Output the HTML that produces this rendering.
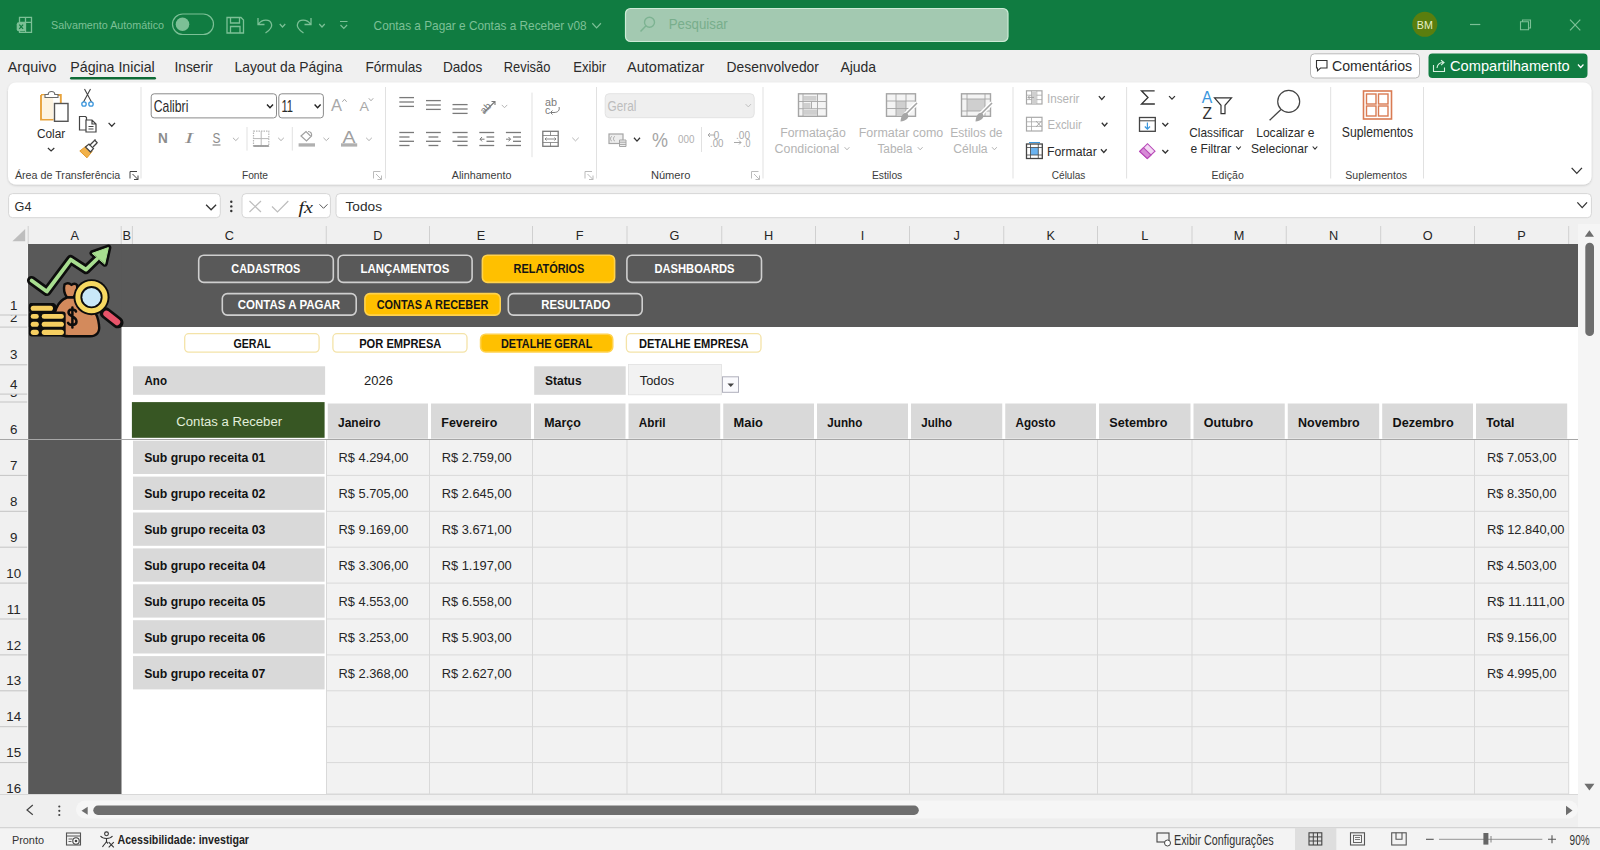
<!DOCTYPE html>
<html><head><meta charset="utf-8"><style>html,body{margin:0;padding:0;background:#F0F0F0;overflow:hidden}svg{display:block}</style></head>
<body><svg width="1600" height="850" viewBox="0 0 1600 850" font-family="Liberation Sans"><rect x="0" y="0" width="1600" height="850" fill="#F0F0F0" /><rect x="0" y="0" width="1600" height="50" fill="#107C41" /><path d="M19.5,17.3 h12 v15 h-12 z M25.5,17.3 v15 M19.5,22.3 h12" stroke="#7CC096" fill="none" stroke-width="1.3" /><rect x="16.7" y="22.2" width="9" height="9" fill="#7CC096" rx="2" /><path d="M19.3,24.6 L23.1,28.8 M23.1,24.6 L19.3,28.8" stroke="#107C41" fill="none" stroke-width="1.2" /><text x="51" y="29.2" font-family="Liberation Sans" font-size="11.48" fill="#7CC096" textLength="113" lengthAdjust="spacingAndGlyphs" >Salvamento Automático</text><rect x="172.5" y="14" width="41" height="20.5" fill="none" rx="10.25" stroke="#7CC096" stroke-width="1.2" /><circle cx="182.5" cy="24.3" r="6.8" fill="#7CC096"/><path d="M227,17.5 h14 l2.5,2.5 v13 h-16.5 z M230.5,17.5 v5.5 h9 v-5.5 M230.5,33 v-6.5 h9.5 v6.5" stroke="#7CC096" fill="none" stroke-width="1.3" /><path d="M258,18 v6.5 h6.5 M258.5,24 C262,19 270,18.5 271.5,24 C272.5,27 270,30 265.5,33" stroke="#7CC096" fill="none" stroke-width="1.3" /><path d="M279.75,24.0 L282.5,27.0 L285.25,24.0" stroke="#7CC096" fill="none" stroke-width="1.2" /><path d="M311,18 v6.5 h-6.5 M310.5,24 C307,19 299,18.5 297.5,24 C296.5,27 299,30 303.5,33" stroke="#7CC096" fill="none" stroke-width="1.3" /><path d="M319.25,24.0 L322,27.0 L324.75,24.0" stroke="#7CC096" fill="none" stroke-width="1.2" /><path d="M340,21.5 h7.5 M340.5,25 l3.3,3.3 l3.3,-3.3" stroke="#7CC096" fill="none" stroke-width="1.2" /><text x="373.6" y="30" font-family="Liberation Sans" font-size="12.72" fill="#7CC096" textLength="213" lengthAdjust="spacingAndGlyphs" >Contas a Pagar e Contas a Receber v08</text><path d="M592.3000000000001,23.25 L596.6,27.950000000000003 L600.9,23.25" stroke="#7CC096" fill="none" stroke-width="1.2" /><rect x="625.5" y="8.5" width="382.5" height="33" fill="#A3C9B1" rx="5" stroke="#CDEBD6" stroke-width="1.2" /><circle cx="649.5" cy="22.3" r="5" fill="none" stroke="#7DB392" stroke-width="1.4"/><line x1="646" y1="25.8" x2="640.5" y2="31.5" stroke="#7DB392" stroke-width="1.5" /><text x="668.7" y="29" font-family="Liberation Sans" font-size="14.53" fill="#78AE8C" textLength="59" lengthAdjust="spacingAndGlyphs" >Pesquisar</text><circle cx="1424.8" cy="24.3" r="12.5" fill="#5A7E0E"/><text x="1424.8" y="28.6" font-family="Liberation Sans" font-size="11.00" fill="#E8F0C8" textLength="16" lengthAdjust="spacingAndGlyphs" text-anchor="middle" >BM</text><line x1="1470" y1="24.5" x2="1480.3" y2="24.5" stroke="#7CC096" stroke-width="1.2" /><path d="M1520.5,21.7 h8 v8 h-8 z M1522.5,21.5 v-1.5 h8 v8 h-1.8" stroke="#7CC096" fill="none" stroke-width="1.1" /><path d="M1570,19.7 L1580.3,30.4 M1580.3,19.7 L1570,30.4" stroke="#7CC096" fill="none" stroke-width="1.2" /><text x="7.8" y="71.8" font-family="Liberation Sans" font-size="14.97" fill="#2B2B2B" textLength="48.7" lengthAdjust="spacingAndGlyphs" >Arquivo</text><text x="70.3" y="71.8" font-family="Liberation Sans" font-size="14.97" fill="#2B2B2B" textLength="84.4" lengthAdjust="spacingAndGlyphs" >Página Inicial</text><text x="174.4" y="71.8" font-family="Liberation Sans" font-size="14.97" fill="#2B2B2B" textLength="38.5" lengthAdjust="spacingAndGlyphs" >Inserir</text><text x="234.5" y="71.8" font-family="Liberation Sans" font-size="14.97" fill="#2B2B2B" textLength="107.9" lengthAdjust="spacingAndGlyphs" >Layout da Página</text><text x="365.4" y="71.8" font-family="Liberation Sans" font-size="14.97" fill="#2B2B2B" textLength="56.8" lengthAdjust="spacingAndGlyphs" >Fórmulas</text><text x="442.9" y="71.8" font-family="Liberation Sans" font-size="14.97" fill="#2B2B2B" textLength="39.4" lengthAdjust="spacingAndGlyphs" >Dados</text><text x="503.8" y="71.8" font-family="Liberation Sans" font-size="14.97" fill="#2B2B2B" textLength="46.6" lengthAdjust="spacingAndGlyphs" >Revisão</text><text x="573.3" y="71.8" font-family="Liberation Sans" font-size="14.97" fill="#2B2B2B" textLength="32.8" lengthAdjust="spacingAndGlyphs" >Exibir</text><text x="627.1" y="71.8" font-family="Liberation Sans" font-size="14.97" fill="#2B2B2B" textLength="77.3" lengthAdjust="spacingAndGlyphs" >Automatizar</text><text x="726.6" y="71.8" font-family="Liberation Sans" font-size="14.97" fill="#2B2B2B" textLength="92.3" lengthAdjust="spacingAndGlyphs" >Desenvolvedor</text><text x="840.4" y="71.8" font-family="Liberation Sans" font-size="14.97" fill="#2B2B2B" textLength="35.7" lengthAdjust="spacingAndGlyphs" >Ajuda</text><rect x="70" y="77" width="86" height="2.6" fill="#0E6B36" rx="1.3" /><rect x="1310.5" y="53.8" width="109" height="24.2" fill="#FFFFFF" rx="4" stroke="#B9B9B9" stroke-width="1" /><path d="M1316.5,60.5 h10.5 v7.5 h-6.5 l-3,2.8 v-2.8 h-1 z" stroke="#333" fill="none" stroke-width="1.1" /><text x="1332" y="71.2" font-family="Liberation Sans" font-size="15.12" fill="#2B2B2B" textLength="80.2" lengthAdjust="spacingAndGlyphs" >Comentários</text><rect x="1428.5" y="53.6" width="159" height="24.4" fill="#107C41" rx="4" /><path d="M1433.5,65 v6.5 h11 v-4 M1437,68 c0.5,-4 3,-5.5 6.5,-5.5 M1441,60.3 l3,2.3 l-3,2.5" stroke="#D8F0E0" fill="none" stroke-width="1.1" /><text x="1450" y="71.2" font-family="Liberation Sans" font-size="15.12" fill="#FFFFFF" textLength="119.6" lengthAdjust="spacingAndGlyphs" >Compartilhamento</text><path d="M1577.95,64.5 L1580.7,67.5 L1583.45,64.5" stroke="#FFFFFF" fill="none" stroke-width="1.2" /><filter id="sh" x="-2%" y="-10%" width="104%" height="130%"><feDropShadow dx="0" dy="1" stdDeviation="1.2" flood-color="#000" flood-opacity="0.18"/></filter><rect x="8" y="82.5" width="1583.5" height="102" fill="#FFFFFF" rx="8" filter="url(#sh)"/><line x1="141" y1="87" x2="141" y2="178.5" stroke="#E1E1E1" stroke-width="1" /><line x1="385.5" y1="87" x2="385.5" y2="178.5" stroke="#E1E1E1" stroke-width="1" /><line x1="596.5" y1="87" x2="596.5" y2="178.5" stroke="#E1E1E1" stroke-width="1" /><line x1="763" y1="87" x2="763" y2="178.5" stroke="#E1E1E1" stroke-width="1" /><line x1="1013" y1="87" x2="1013" y2="178.5" stroke="#E1E1E1" stroke-width="1" /><line x1="1126.6" y1="87" x2="1126.6" y2="178.5" stroke="#E1E1E1" stroke-width="1" /><line x1="1330.7" y1="87" x2="1330.7" y2="178.5" stroke="#E1E1E1" stroke-width="1" /><line x1="1423.5" y1="87" x2="1423.5" y2="178.5" stroke="#E1E1E1" stroke-width="1" /><text x="14.9" y="178.6" font-family="Liberation Sans" font-size="11.05" fill="#3C3C3C" textLength="105.4" lengthAdjust="spacingAndGlyphs" >Área de Transferência</text><text x="241.9" y="178.6" font-family="Liberation Sans" font-size="11.05" fill="#3C3C3C" textLength="26.1" lengthAdjust="spacingAndGlyphs" >Fonte</text><text x="451.8" y="178.6" font-family="Liberation Sans" font-size="11.05" fill="#3C3C3C" textLength="59.6" lengthAdjust="spacingAndGlyphs" >Alinhamento</text><text x="650.9" y="178.6" font-family="Liberation Sans" font-size="11.05" fill="#3C3C3C" textLength="39.5" lengthAdjust="spacingAndGlyphs" >Número</text><text x="871.9" y="178.6" font-family="Liberation Sans" font-size="11.05" fill="#3C3C3C" textLength="30.4" lengthAdjust="spacingAndGlyphs" >Estilos</text><text x="1051.8" y="178.6" font-family="Liberation Sans" font-size="11.05" fill="#3C3C3C" textLength="33.5" lengthAdjust="spacingAndGlyphs" >Células</text><text x="1211.6" y="178.6" font-family="Liberation Sans" font-size="11.05" fill="#3C3C3C" textLength="32.2" lengthAdjust="spacingAndGlyphs" >Edição</text><text x="1345.3" y="178.6" font-family="Liberation Sans" font-size="11.05" fill="#3C3C3C" textLength="61.8" lengthAdjust="spacingAndGlyphs" >Suplementos</text><path d="M130.0,178.5 v-7 h7" stroke="#444" fill="none" stroke-width="1" /><path d="M132.5,174 L138.0,179.5 M138.0,175.5 v4 h-4" stroke="#444" fill="none" stroke-width="1" /><path d="M373.5,178.5 v-7 h7" stroke="#BBB" fill="none" stroke-width="1" /><path d="M376,174 L381.5,179.5 M381.5,175.5 v4 h-4" stroke="#BBB" fill="none" stroke-width="1" /><path d="M585.0,178.5 v-7 h7" stroke="#BBB" fill="none" stroke-width="1" /><path d="M587.5,174 L593.0,179.5 M593.0,175.5 v4 h-4" stroke="#BBB" fill="none" stroke-width="1" /><path d="M751.5,178.5 v-7 h7" stroke="#BBB" fill="none" stroke-width="1" /><path d="M754,174 L759.5,179.5 M759.5,175.5 v4 h-4" stroke="#BBB" fill="none" stroke-width="1" /><path d="M41,95 h5 M56,95 h4.8 v8 M41,95 v24.5 h12.5" stroke="#E8A33C" fill="none" stroke-width="1.9" /><rect x="42.2" y="95.2" width="11" height="23.8" fill="#FDF3E0" /><path d="M45,97.5 v-3 h3.2 c0,-4 6.6,-4 6.6,0 h3.2 v3 z" stroke="#6A6A6A" fill="#FFFFFF" stroke-width="1.1" /><rect x="54.5" y="103.5" width="13.5" height="17.8" fill="#FFFFFF" stroke="#555" stroke-width="1.4" /><text x="36.9" y="138.2" font-family="Liberation Sans" font-size="12.21" fill="#2B2B2B" textLength="28.4" lengthAdjust="spacingAndGlyphs" >Colar</text><path d="M47.9,148.0 L51.1,151.0 L54.300000000000004,148.0" stroke="#333" fill="none" stroke-width="1.2" /><path d="M84.5,89 L91.5,102 M90.5,89 L83.5,102" stroke="#444" fill="none" stroke-width="1.1" /><circle cx="84" cy="104" r="2.2" fill="none" stroke="#3A96DD" stroke-width="1.3"/><circle cx="91" cy="104" r="2.2" fill="none" stroke="#3A96DD" stroke-width="1.3"/><path d="M79.5,116.5 h6 l1,1 v12.5 h-7 z" stroke="#444" fill="#FFFFFF" stroke-width="1.2" /><path d="M86,120 h6 l4,4 v8 h-10 z M92,120 v4 h4 M88.5,126.5 h5 M88.5,129 h5" stroke="#444" fill="#FFFFFF" stroke-width="1.2" /><path d="M108.6,122.89999999999999 L111.8,126.3 L115.0,122.89999999999999" stroke="#333" fill="none" stroke-width="1.3" /><path d="M79.8,151 L86.5,145.8 L92,151.5 L87,157.8 Z" stroke="#E39A2C" fill="#F2B24A" stroke-width="1" /><path d="M85.5,147 L89,144 L93.5,148.5 L90.5,152 Z" stroke="#444" fill="#FFFFFF" stroke-width="1.2" /><path d="M89.5,145.5 L95.5,139.5 M93,147 L97,143" stroke="#444" fill="none" stroke-width="1.3" /><path d="M94.5,140 L97.5,143" stroke="#444" fill="none" stroke-width="1.3" /><rect x="151.2" y="93.8" width="125.3" height="24.1" fill="#FFFFFF" rx="3" stroke="#8A8A8A" stroke-width="1" /><text x="153.8" y="111.5" font-family="Liberation Sans" font-size="15.99" fill="#2B2B2B" textLength="34.6" lengthAdjust="spacingAndGlyphs" >Calibri</text><path d="M267.0,104.60000000000001 L270,107.8 L273.0,104.60000000000001" stroke="#222" fill="none" stroke-width="1.4" /><rect x="278.8" y="93.8" width="44.6" height="24.1" fill="#FFFFFF" rx="3" stroke="#8A8A8A" stroke-width="1" /><text x="281.4" y="111.5" font-family="Liberation Sans" font-size="15.99" fill="#2B2B2B" textLength="11.6" lengthAdjust="spacingAndGlyphs" >11</text><path d="M314.6,104.60000000000001 L317.6,107.8 L320.6,104.60000000000001" stroke="#222" fill="none" stroke-width="1.4" /><text x="331" y="110.8" font-family="Liberation Sans" font-size="16.50" fill="#A8A8A8" textLength="11" lengthAdjust="spacingAndGlyphs" >A</text><path d="M342.3,101.8 L344.5,99.3 L346.7,101.8" stroke="#A8A8A8" fill="none" stroke-width="1" /><text x="359.5" y="110.8" font-family="Liberation Sans" font-size="13.50" fill="#A8A8A8" textLength="9.5" lengthAdjust="spacingAndGlyphs" >A</text><path d="M368.75,98.25 L371,100.75 L373.25,98.25" stroke="#A8A8A8" fill="none" stroke-width="1" /><text x="158" y="142.8" font-family="Liberation Sans" font-size="14.68" fill="#8C8C8C" font-weight="bold" textLength="9.8" lengthAdjust="spacingAndGlyphs" >N</text><text x="185" y="142.8" font-family="Liberation Serif" font-size="15.00" fill="#8C8C8C" textLength="8" lengthAdjust="spacingAndGlyphs" font-style="italic">I</text><text x="212.6" y="142.8" font-family="Liberation Sans" font-size="14.68" fill="#8C8C8C" textLength="7.9" lengthAdjust="spacingAndGlyphs" >S</text><line x1="212.6" y1="145" x2="220.5" y2="145" stroke="#8C8C8C" stroke-width="1.2" /><path d="M232.95000000000002,137.79999999999998 L235.8,140.6 L238.65,137.79999999999998" stroke="#B0B0B0" fill="none" stroke-width="1" /><line x1="247" y1="127" x2="247" y2="150.6" stroke="#E1E1E1" stroke-width="1" /><rect x="253.5" y="131.2" width="15.3" height="14.8" fill="none" stroke="#B8B8B8" stroke-width="1.2" stroke-dasharray="1.5,1"/><line x1="261.2" y1="131.2" x2="261.2" y2="146" stroke="#B8B8B8" stroke-width="1" /><line x1="253.5" y1="138.6" x2="268.8" y2="138.6" stroke="#B8B8B8" stroke-width="1" /><line x1="253.5" y1="146" x2="268.8" y2="146" stroke="#9A9A9A" stroke-width="1.8" /><path d="M278.15,137.79999999999998 L281,140.6 L283.85,137.79999999999998" stroke="#B0B0B0" fill="none" stroke-width="1" /><line x1="292.3" y1="127" x2="292.3" y2="150.6" stroke="#E1E1E1" stroke-width="1" /><path d="M301,136 L306,131.5 L311,136.5 L306.5,141 Z M308,131.5 c3,0 4,2 3.5,5" stroke="#A0A0A0" fill="#FFFFFF" stroke-width="1.2" /><rect x="298.6" y="143.3" width="16.4" height="3.3" fill="#B0B0B0" /><path d="M323.45,137.79999999999998 L326.3,140.6 L329.15000000000003,137.79999999999998" stroke="#B0B0B0" fill="none" stroke-width="1" /><text x="342.5" y="142.5" font-family="Liberation Sans" font-size="16.00" fill="#A0A0A0" textLength="13" lengthAdjust="spacingAndGlyphs" >A</text><rect x="341" y="143.3" width="16.2" height="3.3" fill="#B0B0B0" /><path d="M366.15,137.79999999999998 L369,140.6 L371.85,137.79999999999998" stroke="#B0B0B0" fill="none" stroke-width="1" /><line x1="399.3" y1="97.6" x2="414" y2="97.6" stroke="#7A7A7A" stroke-width="1.3" /><line x1="399.3" y1="102" x2="414" y2="102" stroke="#7A7A7A" stroke-width="1.3" /><line x1="399.3" y1="106.4" x2="414" y2="106.4" stroke="#7A7A7A" stroke-width="1.3" /><line x1="426" y1="100.6" x2="440.8" y2="100.6" stroke="#7A7A7A" stroke-width="1.3" /><line x1="426" y1="105" x2="440.8" y2="105" stroke="#7A7A7A" stroke-width="1.3" /><line x1="426" y1="109.4" x2="440.8" y2="109.4" stroke="#7A7A7A" stroke-width="1.3" /><line x1="452.5" y1="104.6" x2="467.6" y2="104.6" stroke="#7A7A7A" stroke-width="1.3" /><line x1="452.5" y1="109" x2="467.6" y2="109" stroke="#7A7A7A" stroke-width="1.3" /><line x1="452.5" y1="113.4" x2="467.6" y2="113.4" stroke="#7A7A7A" stroke-width="1.3" /><text x="478" y="112" font-family="Liberation Sans" font-size="10.00" fill="#7A7A7A" transform="rotate(-45 484 106)">ab</text><path d="M484,112.5 L495,101.5 M491.5,101.5 h3.5 v3.5" stroke="#7A7A7A" fill="none" stroke-width="1.1" /><path d="M501.75,104.89999999999999 L504.5,107.7 L507.25,104.89999999999999" stroke="#B5B5B5" fill="none" stroke-width="1" /><line x1="399.3" y1="132.5" x2="414" y2="132.5" stroke="#7A7A7A" stroke-width="1.3" /><line x1="399.3" y1="137" x2="409.5" y2="137" stroke="#7A7A7A" stroke-width="1.3" /><line x1="399.3" y1="141.3" x2="414" y2="141.3" stroke="#7A7A7A" stroke-width="1.3" /><line x1="399.3" y1="145.5" x2="409.5" y2="145.5" stroke="#7A7A7A" stroke-width="1.3" /><line x1="426" y1="132.5" x2="440.8" y2="132.5" stroke="#7A7A7A" stroke-width="1.3" /><line x1="428.5" y1="137" x2="438.3" y2="137" stroke="#7A7A7A" stroke-width="1.3" /><line x1="426" y1="141.3" x2="440.8" y2="141.3" stroke="#7A7A7A" stroke-width="1.3" /><line x1="428.5" y1="145.5" x2="438.3" y2="145.5" stroke="#7A7A7A" stroke-width="1.3" /><line x1="452.5" y1="132.5" x2="467.6" y2="132.5" stroke="#7A7A7A" stroke-width="1.3" /><line x1="457.4" y1="137" x2="467.6" y2="137" stroke="#7A7A7A" stroke-width="1.3" /><line x1="452.5" y1="141.3" x2="467.6" y2="141.3" stroke="#7A7A7A" stroke-width="1.3" /><line x1="457.4" y1="145.5" x2="467.6" y2="145.5" stroke="#7A7A7A" stroke-width="1.3" /><line x1="479.3" y1="132.5" x2="494.2" y2="132.5" stroke="#7A7A7A" stroke-width="1.3" /><line x1="479.3" y1="145.5" x2="494.2" y2="145.5" stroke="#7A7A7A" stroke-width="1.3" /><line x1="486.5" y1="137" x2="494.2" y2="137" stroke="#7A7A7A" stroke-width="1.3" /><line x1="486.5" y1="141.3" x2="494.2" y2="141.3" stroke="#7A7A7A" stroke-width="1.3" /><path d="M484.5,139.2 h-4.5 M482,137 l-2,2.2 l2,2.2" stroke="#7A7A7A" fill="none" stroke-width="1" /><line x1="505.9" y1="132.5" x2="521" y2="132.5" stroke="#7A7A7A" stroke-width="1.3" /><line x1="505.9" y1="145.5" x2="521" y2="145.5" stroke="#7A7A7A" stroke-width="1.3" /><line x1="513" y1="137" x2="521" y2="137" stroke="#7A7A7A" stroke-width="1.3" /><line x1="513" y1="141.3" x2="521" y2="141.3" stroke="#7A7A7A" stroke-width="1.3" /><path d="M506,139.2 h4.5 M508.5,137 l2,2.2 l-2,2.2" stroke="#7A7A7A" fill="none" stroke-width="1" /><line x1="532" y1="92.6" x2="532" y2="157.2" stroke="#E1E1E1" stroke-width="1" /><text x="545" y="106" font-family="Liberation Sans" font-size="10.50" fill="#7A7A7A" textLength="12" lengthAdjust="spacingAndGlyphs" >ab</text><text x="545" y="113.5" font-family="Liberation Sans" font-size="10.50" fill="#7A7A7A" >c</text><path d="M559,107 c1,3 -1,5.5 -5,5.5 h-3 M552.5,110.5 l-2,2 l2,2" stroke="#7A7A7A" fill="none" stroke-width="1" /><rect x="542.8" y="131.3" width="15.4" height="15" fill="none" stroke="#7A7A7A" stroke-width="1.3" /><path d="M542.8,135.5 h15.4 M542.8,142.5 h15.4 M550.5,131.3 v4.2 M550.5,142.5 v4.2" stroke="#7A7A7A" fill="none" stroke-width="0.8" /><path d="M545,139 h11 M546.5,137.5 l-1.5,1.5 l1.5,1.5 M554.5,137.5 l1.5,1.5 l-1.5,1.5" stroke="#7A7A7A" fill="none" stroke-width="0.9" /><path d="M572.25,137.70000000000002 L575.5,140.9 L578.75,137.70000000000002" stroke="#B5B5B5" fill="none" stroke-width="1" /><rect x="605.2" y="93.7" width="149" height="24" fill="#EFEFEF" rx="4" stroke="#E3E3E3" stroke-width="1" /><text x="607.5" y="111" font-family="Liberation Sans" font-size="15.26" fill="#BDBDBD" textLength="28.8" lengthAdjust="spacingAndGlyphs" >Geral</text><path d="M745.5999999999999,104.1 L748.3,106.9 L751.0,104.1" stroke="#C0C0C0" fill="none" stroke-width="1" /><rect x="609" y="134" width="14" height="9.5" fill="#EDEDED" stroke="#A5A5A5" stroke-width="1.2" /><path d="M612,136.5 c-2,0 -2,4.5 0,4.5 M615,136.5 c-2,0 -2,4.5 0,4.5" stroke="#A5A5A5" fill="none" stroke-width="0.9" /><path d="M619.5,140 h6.5 v6.5 h-6.5 z M619.5,142.2 h6.5 M619.5,144.4 h6.5" stroke="#A5A5A5" fill="#EDEDED" stroke-width="1" /><path d="M634.0,137.70000000000002 L637,141.1 L640.0,137.70000000000002" stroke="#333" fill="none" stroke-width="1.3" /><text x="652" y="146.8" font-family="Liberation Sans" font-size="20.00" fill="#A5A5A5" textLength="16" lengthAdjust="spacingAndGlyphs" >%</text><text x="678" y="143" font-family="Liberation Sans" font-size="11.50" fill="#B0B0B0" textLength="16.4" lengthAdjust="spacingAndGlyphs" >000</text><line x1="701.5" y1="127" x2="701.5" y2="152" stroke="#E1E1E1" stroke-width="1" /><text x="713.5" y="138.5" font-family="Liberation Sans" font-size="10.50" fill="#A8A8A8" >0</text><path d="M708,135 h7 M710,133 l-2,2 l2,2" stroke="#A8A8A8" fill="none" stroke-width="1" /><text x="710" y="147" font-family="Liberation Sans" font-size="10.50" fill="#A8A8A8" textLength="13.5" lengthAdjust="spacingAndGlyphs" >.00</text><text x="736" y="138.5" font-family="Liberation Sans" font-size="10.50" fill="#A8A8A8" textLength="14" lengthAdjust="spacingAndGlyphs" >.00</text><path d="M734,142.5 h7 M739,140.5 l2,2 l-2,2" stroke="#A8A8A8" fill="none" stroke-width="1" /><text x="743" y="147" font-family="Liberation Sans" font-size="10.50" fill="#A8A8A8" textLength="7.5" lengthAdjust="spacingAndGlyphs" >.0</text><rect x="798.5" y="93.8" width="28" height="22.5" fill="#F4F4F4" stroke="#A5A5A5" stroke-width="1.4" /><rect x="803.5" y="96" width="13" height="4.7" fill="#CFCFCF" /><rect x="803.5" y="103" width="7" height="5" fill="#CFCFCF" /><rect x="803.5" y="109.8" width="14" height="5" fill="#CFCFCF" /><path d="M798.5,101.5 h28 M798.5,108.7 h28 M803,93.8 v22.5 M817.5,93.8 v22.5 M811.5,101.5 v7.2" stroke="#A5A5A5" fill="none" stroke-width="0.9" /><text x="780.3" y="137" font-family="Liberation Sans" font-size="13.08" fill="#B4B4B4" textLength="65.4" lengthAdjust="spacingAndGlyphs" >Formatação</text><text x="774.6" y="153.3" font-family="Liberation Sans" font-size="13.08" fill="#B4B4B4" textLength="64.7" lengthAdjust="spacingAndGlyphs" >Condicional</text><path d="M844.6,147.2 L847,149.8 L849.4,147.2" stroke="#B4B4B4" fill="none" stroke-width="1" /><rect x="886.5" y="93.8" width="29" height="22.5" fill="#F4F4F4" stroke="#A5A5A5" stroke-width="1.4" /><rect x="896" y="101" width="10" height="7.5" fill="#CFCFCF" /><rect x="896" y="108.5" width="10" height="7.5" fill="#CFCFCF" /><path d="M886.5,101 h29 M886.5,108.5 h29 M896,93.8 v22.5 M906,93.8 v22.5" stroke="#A5A5A5" fill="none" stroke-width="0.9" /><path d="M917,103 L905,115" stroke="#FFFFFF" fill="none" stroke-width="4.5" /><path d="M917,103 L906,114" stroke="#A5A5A5" fill="none" stroke-width="1.6" /><path d="M907,113 c-3,-1 -6,2 -6.5,8.5 c5,-0.5 9,-3 7.5,-7 z" stroke="none" fill="#A5A5A5" stroke-width="1" /><text x="858.7" y="137" font-family="Liberation Sans" font-size="13.08" fill="#B4B4B4" textLength="84.6" lengthAdjust="spacingAndGlyphs" >Formatar como</text><text x="877.4" y="153.3" font-family="Liberation Sans" font-size="13.08" fill="#B4B4B4" textLength="35.1" lengthAdjust="spacingAndGlyphs" >Tabela</text><path d="M917.8000000000001,147.2 L920.2,149.8 L922.6,147.2" stroke="#B4B4B4" fill="none" stroke-width="1" /><rect x="961.5" y="93.8" width="29" height="22.5" fill="#F4F4F4" stroke="#A5A5A5" stroke-width="1.4" /><rect x="967" y="99" width="18" height="12" fill="#CFCFCF" /><path d="M961.5,99 h29 M961.5,111 h29 M967,93.8 v22.5 M985,93.8 v22.5" stroke="#A5A5A5" fill="none" stroke-width="0.9" /><path d="M992,103 L980,115" stroke="#FFFFFF" fill="none" stroke-width="4.5" /><path d="M992,103 L981,114" stroke="#A5A5A5" fill="none" stroke-width="1.6" /><path d="M982,113 c-3,-1 -6,2 -6.5,8.5 c5,-0.5 9,-3 7.5,-7 z" stroke="none" fill="#A5A5A5" stroke-width="1" /><text x="950.2" y="137" font-family="Liberation Sans" font-size="13.08" fill="#B4B4B4" textLength="52.4" lengthAdjust="spacingAndGlyphs" >Estilos de</text><text x="953.2" y="153.3" font-family="Liberation Sans" font-size="13.08" fill="#B4B4B4" textLength="34.4" lengthAdjust="spacingAndGlyphs" >Célula</text><path d="M992.0,147.2 L994.4,149.8 L996.8,147.2" stroke="#B4B4B4" fill="none" stroke-width="1" /><rect x="1026.5" y="90.8" width="15.5" height="13.2" fill="#FFFFFF" stroke="#A8A8A8" stroke-width="1.2" /><path d="M1026.5,95.2 h15.5 M1026.5,99.6 h15.5 M1031.5,90.8 v13.2 M1036.8,90.8 v13.2" stroke="#A8A8A8" fill="none" stroke-width="0.8" /><rect x="1032" y="91.5" width="4.5" height="12" fill="#CFCFCF" /><path d="M1034,97.4 h-6 M1030,95.4 l-2,2 l2,2" stroke="#A0A0A0" fill="none" stroke-width="1" /><text x="1047" y="102.6" font-family="Liberation Sans" font-size="12.79" fill="#B4B4B4" textLength="32.4" lengthAdjust="spacingAndGlyphs" >Inserir</text><path d="M1098.85,96.1 L1101.8,99.5 L1104.75,96.1" stroke="#333" fill="none" stroke-width="1.3" /><rect x="1026.5" y="117.3" width="15.5" height="13.7" fill="#FFFFFF" stroke="#A8A8A8" stroke-width="1.2" /><path d="M1026.5,121.8 h15.5 M1026.5,126.4 h15.5 M1031.5,117.3 v13.7" stroke="#A8A8A8" fill="none" stroke-width="0.8" /><path d="M1036,121 L1041.5,127 M1041.5,121 L1036,127" stroke="#A8A8A8" fill="none" stroke-width="1" /><text x="1047.6" y="129" font-family="Liberation Sans" font-size="12.65" fill="#B4B4B4" textLength="34.2" lengthAdjust="spacingAndGlyphs" >Excluir</text><path d="M1101.8,122.7 L1104.6,125.89999999999999 L1107.3999999999999,122.7" stroke="#333" fill="none" stroke-width="1.3" /><rect x="1026.5" y="144" width="15.8" height="14.5" fill="#FFFFFF" stroke="#444" stroke-width="1.3" /><rect x="1030.5" y="147.5" width="7.8" height="7.5" fill="#6BB3F0" /><path d="M1026.5,147.5 h15.8 M1026.5,155 h15.8 M1030.5,144 v14.5 M1038.3,144 v14.5" stroke="#444" fill="none" stroke-width="0.8" /><path d="M1029,142.5 h11" stroke="#3A96DD" fill="none" stroke-width="1" /><text x="1047" y="156.2" font-family="Liberation Sans" font-size="13.66" fill="#2B2B2B" textLength="49.8" lengthAdjust="spacingAndGlyphs" >Formatar</text><path d="M1100.95,149.20000000000002 L1103.8,152.4 L1106.6499999999999,149.20000000000002" stroke="#333" fill="none" stroke-width="1.3" /><path d="M1154,91.5 V90.8 H1141.5 L1148,97.5 L1141.5,104 H1154.2 V103.3" stroke="#333" fill="none" stroke-width="1.3" /><path d="M1169.05,96.1 L1172,99.1 L1174.95,96.1" stroke="#333" fill="none" stroke-width="1.3" /><rect x="1139.5" y="117.5" width="15.8" height="13.8" fill="#FFFFFF" stroke="#444" stroke-width="1.3" /><line x1="1139.5" y1="120.8" x2="1155.3" y2="120.8" stroke="#444" stroke-width="1" /><path d="M1147.4,122.5 v6.5 M1144.8,126.5 l2.6,2.6 l2.6,-2.6" stroke="#3A96DD" fill="none" stroke-width="1.2" /><path d="M1162.35,123.0 L1165.3,126.0 L1168.25,123.0" stroke="#333" fill="none" stroke-width="1.3" /><path d="M1139.7,151.5 L1147.5,143.7 L1155,151.2 L1147.3,158.5 Z" stroke="#B84AB8" fill="#F3D7F3" stroke-width="1.1" /><path d="M1139.7,151.5 L1143.5,147.7 L1151,155 L1147.3,158.5 Z" stroke="#B84AB8" fill="#D68BD6" stroke-width="1.1" /><path d="M1162.35,150.0 L1165.3,153.0 L1168.25,150.0" stroke="#333" fill="none" stroke-width="1.3" /><text x="1201.8" y="103.4" font-family="Liberation Sans" font-size="16.00" fill="#3A96DD" textLength="10.5" lengthAdjust="spacingAndGlyphs" >A</text><text x="1202.5" y="118.5" font-family="Liberation Sans" font-size="16.00" fill="#333" textLength="9.5" lengthAdjust="spacingAndGlyphs" >Z</text><path d="M1214.5,97.8 h17 l-6.5,7.5 v8.3 h-4 v-8.3 z" stroke="#333" fill="none" stroke-width="1.2" /><text x="1189.3" y="136.8" font-family="Liberation Sans" font-size="12.35" fill="#2B2B2B" textLength="54.5" lengthAdjust="spacingAndGlyphs" >Classificar</text><text x="1190.6" y="153.2" font-family="Liberation Sans" font-size="12.35" fill="#2B2B2B" textLength="40.7" lengthAdjust="spacingAndGlyphs" >e Filtrar</text><path d="M1236.2,146.5 L1238.5,149.10000000000002 L1240.8,146.5" stroke="#333" fill="none" stroke-width="1.1" /><circle cx="1288.7" cy="101.4" r="11" fill="none" stroke="#444" stroke-width="1.2"/><line x1="1281" y1="109.5" x2="1269.6" y2="120.3" stroke="#444" stroke-width="1.3" /><text x="1256.2" y="136.8" font-family="Liberation Sans" font-size="12.35" fill="#2B2B2B" textLength="58.4" lengthAdjust="spacingAndGlyphs" >Localizar e</text><text x="1251" y="153.2" font-family="Liberation Sans" font-size="12.35" fill="#2B2B2B" textLength="57" lengthAdjust="spacingAndGlyphs" >Selecionar</text><path d="M1312.7,146.5 L1315,149.10000000000002 L1317.3,146.5" stroke="#333" fill="none" stroke-width="1.1" /><rect x="1363.5" y="91" width="28" height="28" fill="none" stroke="#D97B53" stroke-width="1.6" /><rect x="1366.5" y="94" width="9.5" height="10" fill="none" stroke="#D97B53" stroke-width="1.4" /><rect x="1378.5" y="94" width="9.5" height="10" fill="none" stroke="#D97B53" stroke-width="1.4" /><rect x="1366.5" y="106" width="9.5" height="10" fill="none" stroke="#D97B53" stroke-width="1.4" /><rect x="1378.5" y="106" width="9.5" height="10" fill="none" stroke="#D97B53" stroke-width="1.4" /><text x="1341.8" y="136.5" font-family="Liberation Sans" font-size="13.81" fill="#2B2B2B" textLength="71.2" lengthAdjust="spacingAndGlyphs" >Suplementos</text><path d="M1571.6499999999999,167.85 L1576.8,173.35 L1581.95,167.85" stroke="#333" fill="none" stroke-width="1.3" /><rect x="8.6" y="193.6" width="211.7" height="24.1" fill="#FFFFFF" rx="4" stroke="#D6D6D6" stroke-width="1" /><text x="14.6" y="211" font-family="Liberation Sans" font-size="13.08" fill="#2B2B2B" textLength="16.9" lengthAdjust="spacingAndGlyphs" >G4</text><path d="M206.1,204.8 L211.1,209.8 L216.1,204.8" stroke="#333" fill="none" stroke-width="1.3" /><circle cx="231.3" cy="201.8" r="1.2" fill="#333"/><circle cx="231.3" cy="206.4" r="1.2" fill="#333"/><circle cx="231.3" cy="211" r="1.2" fill="#333"/><rect x="242" y="193.6" width="88.4" height="24.1" fill="#FFFFFF" rx="4" stroke="#D6D6D6" stroke-width="1" /><path d="M249.5,201 L261,212 M261,201 L249.5,212" stroke="#BDBDBD" fill="none" stroke-width="1.2" /><path d="M272,206.5 L277.5,212 L288.3,201" stroke="#BDBDBD" fill="none" stroke-width="1.2" /><text x="298.4" y="212.5" font-family="Liberation Serif" font-size="17.00" fill="#222" textLength="14.6" lengthAdjust="spacingAndGlyphs" font-style="italic">fx</text><path d="M319.5,204.3 L323.5,208.3 L327.5,204.3" stroke="#555" fill="none" stroke-width="1" /><rect x="336" y="193.6" width="1255.4" height="24.1" fill="#FFFFFF" rx="4" stroke="#D6D6D6" stroke-width="1" /><text x="345.5" y="211" font-family="Liberation Sans" font-size="13.08" fill="#2B2B2B" textLength="36.5" lengthAdjust="spacingAndGlyphs" >Todos</text><path d="M1577.3500000000001,202.4 L1582.2,207.6 L1587.05,202.4" stroke="#333" fill="none" stroke-width="1.3" /><rect x="0" y="224" width="1578" height="20" fill="#F0F0F0" /><path d="M12.4,241.3 L25.2,241.3 L25.2,229 Z" stroke="none" fill="#BEBEBE" stroke-width="1" /><line x1="28.2" y1="226" x2="28.2" y2="244" stroke="#D0D0D0" stroke-width="1" /><line x1="121.2" y1="226" x2="121.2" y2="244" stroke="#D0D0D0" stroke-width="1" /><text x="74.7" y="239.75" font-family="Liberation Sans" font-size="12.72" fill="#262626" text-anchor="middle" >A</text><line x1="132.4" y1="226" x2="132.4" y2="244" stroke="#D0D0D0" stroke-width="1" /><text x="126.80000000000001" y="239.75" font-family="Liberation Sans" font-size="12.72" fill="#262626" text-anchor="middle" >B</text><line x1="326.25" y1="226" x2="326.25" y2="244" stroke="#D0D0D0" stroke-width="1" /><text x="229.325" y="239.75" font-family="Liberation Sans" font-size="12.72" fill="#262626" text-anchor="middle" >C</text><line x1="429.5" y1="226" x2="429.5" y2="244" stroke="#D0D0D0" stroke-width="1" /><text x="377.875" y="239.75" font-family="Liberation Sans" font-size="12.72" fill="#262626" text-anchor="middle" >D</text><line x1="532.5" y1="226" x2="532.5" y2="244" stroke="#D0D0D0" stroke-width="1" /><text x="481.0" y="239.75" font-family="Liberation Sans" font-size="12.72" fill="#262626" text-anchor="middle" >E</text><line x1="627" y1="226" x2="627" y2="244" stroke="#D0D0D0" stroke-width="1" /><text x="579.75" y="239.75" font-family="Liberation Sans" font-size="12.72" fill="#262626" text-anchor="middle" >F</text><line x1="721.75" y1="226" x2="721.75" y2="244" stroke="#D0D0D0" stroke-width="1" /><text x="674.375" y="239.75" font-family="Liberation Sans" font-size="12.72" fill="#262626" text-anchor="middle" >G</text><line x1="815.5" y1="226" x2="815.5" y2="244" stroke="#D0D0D0" stroke-width="1" /><text x="768.625" y="239.75" font-family="Liberation Sans" font-size="12.72" fill="#262626" text-anchor="middle" >H</text><line x1="909.5" y1="226" x2="909.5" y2="244" stroke="#D0D0D0" stroke-width="1" /><text x="862.5" y="239.75" font-family="Liberation Sans" font-size="12.72" fill="#262626" text-anchor="middle" >I</text><line x1="1003.75" y1="226" x2="1003.75" y2="244" stroke="#D0D0D0" stroke-width="1" /><text x="956.625" y="239.75" font-family="Liberation Sans" font-size="12.72" fill="#262626" text-anchor="middle" >J</text><line x1="1097.5" y1="226" x2="1097.5" y2="244" stroke="#D0D0D0" stroke-width="1" /><text x="1050.625" y="239.75" font-family="Liberation Sans" font-size="12.72" fill="#262626" text-anchor="middle" >K</text><line x1="1192" y1="226" x2="1192" y2="244" stroke="#D0D0D0" stroke-width="1" /><text x="1144.75" y="239.75" font-family="Liberation Sans" font-size="12.72" fill="#262626" text-anchor="middle" >L</text><line x1="1286.25" y1="226" x2="1286.25" y2="244" stroke="#D0D0D0" stroke-width="1" /><text x="1239.125" y="239.75" font-family="Liberation Sans" font-size="12.72" fill="#262626" text-anchor="middle" >M</text><line x1="1380.7" y1="226" x2="1380.7" y2="244" stroke="#D0D0D0" stroke-width="1" /><text x="1333.475" y="239.75" font-family="Liberation Sans" font-size="12.72" fill="#262626" text-anchor="middle" >N</text><line x1="1474.5" y1="226" x2="1474.5" y2="244" stroke="#D0D0D0" stroke-width="1" /><text x="1427.6" y="239.75" font-family="Liberation Sans" font-size="12.72" fill="#262626" text-anchor="middle" >O</text><line x1="1568.7" y1="226" x2="1568.7" y2="244" stroke="#D0D0D0" stroke-width="1" /><text x="1521.6" y="239.75" font-family="Liberation Sans" font-size="12.72" fill="#262626" text-anchor="middle" >P</text><rect x="0" y="244" width="28.2" height="550" fill="#F0F0F0" /><line x1="28.2" y1="244" x2="28.2" y2="794" stroke="#D0D0D0" stroke-width="1" /><line x1="0" y1="315" x2="28.2" y2="315" stroke="#C4C4C4" stroke-width="1" /><clipPath id="rh0"><rect x="0" y="244.5" width="28" height="70.5"/></clipPath><text x="13.8" y="309.6" font-family="Liberation Sans" font-size="13.37" fill="#262626" text-anchor="middle" clip-path="url(#rh0)">1</text><line x1="0" y1="327.1" x2="28.2" y2="327.1" stroke="#C4C4C4" stroke-width="1" /><clipPath id="rh1"><rect x="0" y="315.5" width="28" height="11.600000000000023"/></clipPath><text x="13.8" y="321.70000000000005" font-family="Liberation Sans" font-size="13.37" fill="#262626" text-anchor="middle" clip-path="url(#rh1)">2</text><line x1="0" y1="364.8" x2="28.2" y2="364.8" stroke="#C4C4C4" stroke-width="1" /><clipPath id="rh2"><rect x="0" y="327.6" width="28" height="37.19999999999999"/></clipPath><text x="13.8" y="359.40000000000003" font-family="Liberation Sans" font-size="13.37" fill="#262626" text-anchor="middle" clip-path="url(#rh2)">3</text><line x1="0" y1="394.1" x2="28.2" y2="394.1" stroke="#C4C4C4" stroke-width="1" /><clipPath id="rh3"><rect x="0" y="365.3" width="28" height="28.80000000000001"/></clipPath><text x="13.8" y="388.70000000000005" font-family="Liberation Sans" font-size="13.37" fill="#262626" text-anchor="middle" clip-path="url(#rh3)">4</text><line x1="0" y1="402" x2="28.2" y2="402" stroke="#C4C4C4" stroke-width="1" /><clipPath id="rh4"><rect x="0" y="394.6" width="28" height="7.399999999999977"/></clipPath><text x="13.8" y="396.6" font-family="Liberation Sans" font-size="13.37" fill="#262626" text-anchor="middle" clip-path="url(#rh4)">5</text><line x1="0" y1="439.5" x2="28.2" y2="439.5" stroke="#C4C4C4" stroke-width="1" /><clipPath id="rh5"><rect x="0" y="402.5" width="28" height="37.0"/></clipPath><text x="13.8" y="434.1" font-family="Liberation Sans" font-size="13.37" fill="#262626" text-anchor="middle" clip-path="url(#rh5)">6</text><line x1="0" y1="475.4" x2="28.2" y2="475.4" stroke="#C4C4C4" stroke-width="1" /><clipPath id="rh6"><rect x="0" y="440.0" width="28" height="35.39999999999998"/></clipPath><text x="13.8" y="470.0" font-family="Liberation Sans" font-size="13.37" fill="#262626" text-anchor="middle" clip-path="url(#rh6)">7</text><line x1="0" y1="511.29999999999995" x2="28.2" y2="511.29999999999995" stroke="#C4C4C4" stroke-width="1" /><clipPath id="rh7"><rect x="0" y="475.9" width="28" height="35.39999999999998"/></clipPath><text x="13.8" y="505.9" font-family="Liberation Sans" font-size="13.37" fill="#262626" text-anchor="middle" clip-path="url(#rh7)">8</text><line x1="0" y1="547.1999999999999" x2="28.2" y2="547.1999999999999" stroke="#C4C4C4" stroke-width="1" /><clipPath id="rh8"><rect x="0" y="511.79999999999995" width="28" height="35.39999999999998"/></clipPath><text x="13.8" y="541.8" font-family="Liberation Sans" font-size="13.37" fill="#262626" text-anchor="middle" clip-path="url(#rh8)">9</text><line x1="0" y1="583.0999999999999" x2="28.2" y2="583.0999999999999" stroke="#C4C4C4" stroke-width="1" /><clipPath id="rh9"><rect x="0" y="547.6999999999999" width="28" height="35.39999999999998"/></clipPath><text x="13.8" y="577.6999999999999" font-family="Liberation Sans" font-size="13.37" fill="#262626" text-anchor="middle" clip-path="url(#rh9)">10</text><line x1="0" y1="618.9999999999999" x2="28.2" y2="618.9999999999999" stroke="#C4C4C4" stroke-width="1" /><clipPath id="rh10"><rect x="0" y="583.5999999999999" width="28" height="35.39999999999998"/></clipPath><text x="13.8" y="613.5999999999999" font-family="Liberation Sans" font-size="13.37" fill="#262626" text-anchor="middle" clip-path="url(#rh10)">11</text><line x1="0" y1="654.8999999999999" x2="28.2" y2="654.8999999999999" stroke="#C4C4C4" stroke-width="1" /><clipPath id="rh11"><rect x="0" y="619.4999999999999" width="28" height="35.39999999999998"/></clipPath><text x="13.8" y="649.4999999999999" font-family="Liberation Sans" font-size="13.37" fill="#262626" text-anchor="middle" clip-path="url(#rh11)">12</text><line x1="0" y1="690.7999999999998" x2="28.2" y2="690.7999999999998" stroke="#C4C4C4" stroke-width="1" /><clipPath id="rh12"><rect x="0" y="655.3999999999999" width="28" height="35.39999999999998"/></clipPath><text x="13.8" y="685.3999999999999" font-family="Liberation Sans" font-size="13.37" fill="#262626" text-anchor="middle" clip-path="url(#rh12)">13</text><line x1="0" y1="726.6999999999998" x2="28.2" y2="726.6999999999998" stroke="#C4C4C4" stroke-width="1" /><clipPath id="rh13"><rect x="0" y="691.2999999999998" width="28" height="35.39999999999998"/></clipPath><text x="13.8" y="721.2999999999998" font-family="Liberation Sans" font-size="13.37" fill="#262626" text-anchor="middle" clip-path="url(#rh13)">14</text><line x1="0" y1="762.5999999999998" x2="28.2" y2="762.5999999999998" stroke="#C4C4C4" stroke-width="1" /><clipPath id="rh14"><rect x="0" y="727.1999999999998" width="28" height="35.39999999999998"/></clipPath><text x="13.8" y="757.1999999999998" font-family="Liberation Sans" font-size="13.37" fill="#262626" text-anchor="middle" clip-path="url(#rh14)">15</text><line x1="0" y1="798.4999999999998" x2="28.2" y2="798.4999999999998" stroke="#C4C4C4" stroke-width="1" /><clipPath id="rh15"><rect x="0" y="763.0999999999998" width="28" height="30.900000000000205"/></clipPath><text x="13.8" y="793.0999999999998" font-family="Liberation Sans" font-size="13.37" fill="#262626" text-anchor="middle" clip-path="url(#rh15)">16</text><line x1="27.6" y1="244" x2="27.6" y2="794" stroke="#FAFAFA" stroke-width="0.8" /><rect x="28.2" y="244" width="1550" height="550" fill="#FFFFFF" /><rect x="28.2" y="244" width="1550" height="83" fill="#595959" /><rect x="28.2" y="244" width="93.3" height="550" fill="#595959" /><rect x="326.5" y="439.5" width="1242" height="355" fill="#F2F2F2" /><line x1="326.5" y1="475.4" x2="1568.7" y2="475.4" stroke="#D9D9D9" stroke-width="1" /><line x1="326.5" y1="511.29999999999995" x2="1568.7" y2="511.29999999999995" stroke="#D9D9D9" stroke-width="1" /><line x1="326.5" y1="547.1999999999999" x2="1568.7" y2="547.1999999999999" stroke="#D9D9D9" stroke-width="1" /><line x1="326.5" y1="583.0999999999999" x2="1568.7" y2="583.0999999999999" stroke="#D9D9D9" stroke-width="1" /><line x1="326.5" y1="618.9999999999999" x2="1568.7" y2="618.9999999999999" stroke="#D9D9D9" stroke-width="1" /><line x1="326.5" y1="654.8999999999999" x2="1568.7" y2="654.8999999999999" stroke="#D9D9D9" stroke-width="1" /><line x1="326.5" y1="690.7999999999998" x2="1568.7" y2="690.7999999999998" stroke="#D9D9D9" stroke-width="1" /><line x1="326.5" y1="726.6999999999998" x2="1568.7" y2="726.6999999999998" stroke="#D9D9D9" stroke-width="1" /><line x1="326.5" y1="762.5999999999998" x2="1568.7" y2="762.5999999999998" stroke="#D9D9D9" stroke-width="1" /><line x1="326.5" y1="798.4999999999998" x2="1568.7" y2="798.4999999999998" stroke="#D9D9D9" stroke-width="1" /><line x1="429.5" y1="439.5" x2="429.5" y2="794" stroke="#D9D9D9" stroke-width="1" /><line x1="532.5" y1="439.5" x2="532.5" y2="794" stroke="#D9D9D9" stroke-width="1" /><line x1="627" y1="439.5" x2="627" y2="794" stroke="#D9D9D9" stroke-width="1" /><line x1="721.75" y1="439.5" x2="721.75" y2="794" stroke="#D9D9D9" stroke-width="1" /><line x1="815.5" y1="439.5" x2="815.5" y2="794" stroke="#D9D9D9" stroke-width="1" /><line x1="909.5" y1="439.5" x2="909.5" y2="794" stroke="#D9D9D9" stroke-width="1" /><line x1="1003.75" y1="439.5" x2="1003.75" y2="794" stroke="#D9D9D9" stroke-width="1" /><line x1="1097.5" y1="439.5" x2="1097.5" y2="794" stroke="#D9D9D9" stroke-width="1" /><line x1="1192" y1="439.5" x2="1192" y2="794" stroke="#D9D9D9" stroke-width="1" /><line x1="1286.25" y1="439.5" x2="1286.25" y2="794" stroke="#D9D9D9" stroke-width="1" /><line x1="1380.7" y1="439.5" x2="1380.7" y2="794" stroke="#D9D9D9" stroke-width="1" /><line x1="1474.5" y1="439.5" x2="1474.5" y2="794" stroke="#D9D9D9" stroke-width="1" /><line x1="1568.7" y1="439.5" x2="1568.7" y2="794" stroke="#D9D9D9" stroke-width="1" /><line x1="326.5" y1="439.5" x2="326.5" y2="794" stroke="#D9D9D9" stroke-width="1" /><line x1="326.5" y1="794" x2="1568.7" y2="794" stroke="#D9D9D9" stroke-width="1" /><line x1="0" y1="439.5" x2="1578" y2="439.5" stroke="#A6A6A6" stroke-width="1.2" /><g stroke-linejoin="round" stroke-linecap="round"><path d="M31.6,280.5 L46.8,291.5 L70.7,259.6 L86,269.6 L97,259" stroke="#0D0D0D" fill="none" stroke-width="9.2" /><path d="M92.5,253.2 L108.4,247.6 L104.8,263.8 Z" stroke="#0D0D0D" fill="#0D0D0D" stroke-width="6" /><path d="M31.6,280.5 L46.8,291.5 L70.7,259.6 L86,269.6 L97,259" stroke="#A8DE90" fill="none" stroke-width="3.8" /><path d="M92.5,253.2 L108.4,247.6 L104.8,263.8 Z" stroke="#A8DE90" fill="#A8DE90" stroke-width="1" /><path d="M64.5,284.5 c3,-2.5 5.5,-1 7,0.5 c1.5,-1.5 4,-2 5.5,0 c1,4 -1.5,9.5 -3.5,12.5 h-6.5 c-2.5,-3.5 -3.5,-9 -2.5,-13 z" stroke="#0D0D0D" fill="#D38A5C" stroke-width="2.4" /><path d="M67,297.5 C57,301 53,313 54.5,324 C55.5,333 61,336.3 69,336.3 H90 C97,336.3 100,332 99,325 C98,313 89,300 78,297.5 Z" stroke="#0D0D0D" fill="#D38A5C" stroke-width="2.4" /><path d="M76,311.5 C75,308.8 68.5,308.5 68.5,312.5 C68.5,316.8 76.5,316 76.5,321.5 C76.5,325.8 69.5,326 68,322.8 M72.4,307.5 V327.5" stroke="#0D0D0D" fill="none" stroke-width="2.5" /><path d="M31.5,303.1 H52.3 a4.75,4.75 0 0 1 0,9.5 H31.5 a2.6,4.75 0 0 1 0,-9.5 Z" stroke="none" fill="#0D0D0D" stroke-width="1" /><rect x="28.9" y="311.5" width="36.8" height="25" fill="#0D0D0D" rx="3" /><rect x="28.9" y="303.1" width="25.9" height="10" fill="#0D0D0D" rx="3" /><rect x="30.7" y="305.7" width="22.3" height="5.100000000000023" fill="#F6CF61" rx="2.5500000000000114" /><rect x="30.7" y="314.1" width="8.099999999999998" height="4.699999999999989" fill="#F6CF61" rx="2.3499999999999943" /><rect x="41.7" y="314.1" width="22.199999999999996" height="4.699999999999989" fill="#F6CF61" rx="2.3499999999999943" /><rect x="30.7" y="321.7" width="8.099999999999998" height="5.100000000000023" fill="#F6CF61" rx="2.5500000000000114" /><rect x="41.7" y="321.7" width="22.199999999999996" height="5.100000000000023" fill="#F6CF61" rx="2.5500000000000114" /><rect x="30.7" y="329.7" width="8.099999999999998" height="5.199999999999989" fill="#F6CF61" rx="2.5999999999999943" /><rect x="41.7" y="329.7" width="22.199999999999996" height="5.199999999999989" fill="#F6CF61" rx="2.5999999999999943" /><path d="M105.5,313 L117.8,322.6" stroke="#0D0D0D" fill="none" stroke-width="11.5" /><path d="M106.5,313.8 L117,322" stroke="#E8546A" fill="none" stroke-width="6.4" /><circle cx="91.5" cy="297.2" r="18" fill="#0D0D0D"/><circle cx="91.5" cy="297.2" r="13.6" fill="none" stroke="#F6D861" stroke-width="5"/><circle cx="91.5" cy="297.2" r="9.2" fill="#C9E8F8"/></g><rect x="198.70000000000002" y="255.20000000000002" width="134.60000000000002" height="27.19999999999998" fill="#595959" rx="5" stroke="#CFCFCF" stroke-width="1.6" /><text x="231.3" y="273.0" font-family="Liberation Sans" font-size="13.66" fill="#FFFFFF" font-weight="bold" textLength="69.0" lengthAdjust="spacingAndGlyphs" >CADASTROS</text><rect x="338.1" y="255.20000000000002" width="133.99999999999997" height="27.19999999999998" fill="#595959" rx="5" stroke="#CFCFCF" stroke-width="1.6" /><text x="360.4" y="273.0" font-family="Liberation Sans" font-size="13.66" fill="#FFFFFF" font-weight="bold" textLength="88.9" lengthAdjust="spacingAndGlyphs" >LANÇAMENTOS</text><rect x="482.40000000000003" y="255.20000000000002" width="132.19999999999996" height="27.19999999999998" fill="#FFC000" rx="5" stroke="#FFD24D" stroke-width="1.6" /><text x="513.5" y="273.0" font-family="Liberation Sans" font-size="13.66" fill="#141414" font-weight="bold" textLength="70.9" lengthAdjust="spacingAndGlyphs" >RELATÓRIOS</text><rect x="626.9" y="255.20000000000002" width="134.59999999999994" height="27.19999999999998" fill="#595959" rx="5" stroke="#CFCFCF" stroke-width="1.6" /><text x="654.4" y="273.0" font-family="Liberation Sans" font-size="13.66" fill="#FFFFFF" font-weight="bold" textLength="80.1" lengthAdjust="spacingAndGlyphs" >DASHBOARDS</text><rect x="222.3" y="293.6" width="133.9" height="21.499999999999964" fill="#595959" rx="5" stroke="#CFCFCF" stroke-width="1.6" /><text x="237.8" y="309.2" font-family="Liberation Sans" font-size="13.66" fill="#FFFFFF" font-weight="bold" textLength="102.3" lengthAdjust="spacingAndGlyphs" >CONTAS A PAGAR</text><rect x="364.90000000000003" y="293.6" width="135.29999999999998" height="21.499999999999964" fill="#FFC000" rx="5" stroke="#FFD24D" stroke-width="1.6" /><text x="376.7" y="309.2" font-family="Liberation Sans" font-size="13.66" fill="#141414" font-weight="bold" textLength="111.7" lengthAdjust="spacingAndGlyphs" >CONTAS A RECEBER</text><rect x="508.3" y="293.6" width="133.9" height="21.499999999999964" fill="#595959" rx="5" stroke="#CFCFCF" stroke-width="1.6" /><text x="541.3" y="309.2" font-family="Liberation Sans" font-size="13.66" fill="#FFFFFF" font-weight="bold" textLength="69.0" lengthAdjust="spacingAndGlyphs" >RESULTADO</text><rect x="184.7" y="333.7" width="134.4" height="18.400000000000013" fill="#FFFFFF" rx="4" stroke="#F4E3A8" stroke-width="1.3" /><text x="233.5" y="347.9" font-family="Liberation Sans" font-size="12.94" fill="#111111" font-weight="bold" textLength="37.2" lengthAdjust="spacingAndGlyphs" >GERAL</text><rect x="332.9" y="333.7" width="134.1" height="18.400000000000013" fill="#FFFFFF" rx="4" stroke="#F4E3A8" stroke-width="1.3" /><text x="359.2" y="347.9" font-family="Liberation Sans" font-size="12.94" fill="#111111" font-weight="bold" textLength="82.2" lengthAdjust="spacingAndGlyphs" >POR EMPRESA</text><rect x="480.6" y="334.2" width="132.1" height="17.800000000000033" fill="#FFC000" rx="5" stroke="#FFD24D" stroke-width="1.6" /><text x="501" y="347.9" font-family="Liberation Sans" font-size="12.94" fill="#141414" font-weight="bold" textLength="91.3" lengthAdjust="spacingAndGlyphs" >DETALHE GERAL</text><rect x="626.4000000000001" y="333.7" width="134.6" height="18.400000000000013" fill="#FFFFFF" rx="4" stroke="#F4E3A8" stroke-width="1.3" /><text x="638.9" y="347.9" font-family="Liberation Sans" font-size="12.94" fill="#111111" font-weight="bold" textLength="109.7" lengthAdjust="spacingAndGlyphs" >DETALHE EMPRESA</text><rect x="133" y="366.3" width="192.1" height="28.5" fill="#D9D9D9" /><text x="144.5" y="385" font-family="Liberation Sans" font-size="12.72" fill="#111" font-weight="bold" textLength="22.5" lengthAdjust="spacingAndGlyphs" >Ano</text><text x="364.1" y="385" font-family="Liberation Sans" font-size="13.52" fill="#222" textLength="28.9" lengthAdjust="spacingAndGlyphs" >2026</text><rect x="534.2" y="366.3" width="91.5" height="28.5" fill="#D9D9D9" /><text x="545" y="385" font-family="Liberation Sans" font-size="12.72" fill="#111" font-weight="bold" textLength="36.6" lengthAdjust="spacingAndGlyphs" >Status</text><rect x="628.5" y="364.4" width="92.9" height="30.4" fill="#F2F2F2" stroke="#E0E0E0" stroke-width="0.8" /><text x="639.8" y="385" font-family="Liberation Sans" font-size="13.52" fill="#222" textLength="34.3" lengthAdjust="spacingAndGlyphs" >Todos</text><rect x="722.5" y="376.8" width="16" height="15.5" fill="#FAFAFD" stroke="#B0B0BC" stroke-width="1" /><path d="M727.5,383.5 h6.5 l-3.25,3.5 z" stroke="none" fill="#444" stroke-width="1" /><rect x="131.9" y="402.1" width="192.7" height="35.7" fill="#375623" /><text x="176.3" y="425.9" font-family="Liberation Sans" font-size="13.23" fill="#E2EFDA" textLength="105.8" lengthAdjust="spacingAndGlyphs" >Contas a Receber</text><rect x="327.75" y="403.5" width="100.25" height="35.2" fill="#D9D9D9" /><text x="338.05" y="426.5" font-family="Liberation Sans" font-size="12.79" fill="#111" font-weight="bold" textLength="42.5" lengthAdjust="spacingAndGlyphs" >Janeiro</text><rect x="431.0" y="403.5" width="100.0" height="35.2" fill="#D9D9D9" /><text x="441.3" y="426.5" font-family="Liberation Sans" font-size="12.79" fill="#111" font-weight="bold" textLength="56" lengthAdjust="spacingAndGlyphs" >Fevereiro</text><rect x="534.0" y="403.5" width="91.5" height="35.2" fill="#D9D9D9" /><text x="544.3" y="426.5" font-family="Liberation Sans" font-size="12.79" fill="#111" font-weight="bold" textLength="36.5" lengthAdjust="spacingAndGlyphs" >Março</text><rect x="628.5" y="403.5" width="91.75" height="35.2" fill="#D9D9D9" /><text x="638.8" y="426.5" font-family="Liberation Sans" font-size="12.79" fill="#111" font-weight="bold" textLength="26.75" lengthAdjust="spacingAndGlyphs" >Abril</text><rect x="723.25" y="403.5" width="90.75" height="35.2" fill="#D9D9D9" /><text x="733.55" y="426.5" font-family="Liberation Sans" font-size="12.79" fill="#111" font-weight="bold" textLength="29.25" lengthAdjust="spacingAndGlyphs" >Maio</text><rect x="817.0" y="403.5" width="91.0" height="35.2" fill="#D9D9D9" /><text x="827.3" y="426.5" font-family="Liberation Sans" font-size="12.79" fill="#111" font-weight="bold" textLength="35" lengthAdjust="spacingAndGlyphs" >Junho</text><rect x="911.0" y="403.5" width="91.25" height="35.2" fill="#D9D9D9" /><text x="921.3" y="426.5" font-family="Liberation Sans" font-size="12.79" fill="#111" font-weight="bold" textLength="30.75" lengthAdjust="spacingAndGlyphs" >Julho</text><rect x="1005.25" y="403.5" width="90.75" height="35.2" fill="#D9D9D9" /><text x="1015.55" y="426.5" font-family="Liberation Sans" font-size="12.79" fill="#111" font-weight="bold" textLength="40" lengthAdjust="spacingAndGlyphs" >Agosto</text><rect x="1099.0" y="403.5" width="91.5" height="35.2" fill="#D9D9D9" /><text x="1109.3" y="426.5" font-family="Liberation Sans" font-size="12.79" fill="#111" font-weight="bold" textLength="58.1" lengthAdjust="spacingAndGlyphs" >Setembro</text><rect x="1193.5" y="403.5" width="91.25" height="35.2" fill="#D9D9D9" /><text x="1203.8" y="426.5" font-family="Liberation Sans" font-size="12.79" fill="#111" font-weight="bold" textLength="49.25" lengthAdjust="spacingAndGlyphs" >Outubro</text><rect x="1287.75" y="403.5" width="91.45000000000005" height="35.2" fill="#D9D9D9" /><text x="1298.05" y="426.5" font-family="Liberation Sans" font-size="12.79" fill="#111" font-weight="bold" textLength="61.7" lengthAdjust="spacingAndGlyphs" >Novembro</text><rect x="1382.2" y="403.5" width="90.79999999999995" height="35.2" fill="#D9D9D9" /><text x="1392.5" y="426.5" font-family="Liberation Sans" font-size="12.79" fill="#111" font-weight="bold" textLength="61.2" lengthAdjust="spacingAndGlyphs" >Dezembro</text><rect x="1476.0" y="403.5" width="91.20000000000005" height="35.2" fill="#D9D9D9" /><text x="1486.3" y="426.5" font-family="Liberation Sans" font-size="12.79" fill="#111" font-weight="bold" textLength="28.1" lengthAdjust="spacingAndGlyphs" >Total</text><rect x="133" y="440.7" width="191.6" height="33.3" fill="#D9D9D9" /><text x="144.2" y="462.45" font-family="Liberation Sans" font-size="13.15" fill="#111" font-weight="bold" textLength="121.1" lengthAdjust="spacingAndGlyphs" >Sub grupo receita 01</text><text x="338.5" y="462.45" font-family="Liberation Sans" font-size="13.15" fill="#262626" textLength="70" lengthAdjust="spacingAndGlyphs" >R$ 4.294,00</text><text x="441.7" y="462.45" font-family="Liberation Sans" font-size="13.15" fill="#262626" textLength="70" lengthAdjust="spacingAndGlyphs" >R$ 2.759,00</text><text x="1487.1" y="462.45" font-family="Liberation Sans" font-size="13.15" fill="#262626" textLength="69.4" lengthAdjust="spacingAndGlyphs" >R$ 7.053,00</text><rect x="133" y="476.59999999999997" width="191.6" height="33.3" fill="#D9D9D9" /><text x="144.2" y="498.34999999999997" font-family="Liberation Sans" font-size="13.15" fill="#111" font-weight="bold" textLength="121.1" lengthAdjust="spacingAndGlyphs" >Sub grupo receita 02</text><text x="338.5" y="498.34999999999997" font-family="Liberation Sans" font-size="13.15" fill="#262626" textLength="70" lengthAdjust="spacingAndGlyphs" >R$ 5.705,00</text><text x="441.7" y="498.34999999999997" font-family="Liberation Sans" font-size="13.15" fill="#262626" textLength="70" lengthAdjust="spacingAndGlyphs" >R$ 2.645,00</text><text x="1487.1" y="498.34999999999997" font-family="Liberation Sans" font-size="13.15" fill="#262626" textLength="69.4" lengthAdjust="spacingAndGlyphs" >R$ 8.350,00</text><rect x="133" y="512.5" width="191.6" height="33.3" fill="#D9D9D9" /><text x="144.2" y="534.25" font-family="Liberation Sans" font-size="13.15" fill="#111" font-weight="bold" textLength="121.1" lengthAdjust="spacingAndGlyphs" >Sub grupo receita 03</text><text x="338.5" y="534.25" font-family="Liberation Sans" font-size="13.15" fill="#262626" textLength="70" lengthAdjust="spacingAndGlyphs" >R$ 9.169,00</text><text x="441.7" y="534.25" font-family="Liberation Sans" font-size="13.15" fill="#262626" textLength="70" lengthAdjust="spacingAndGlyphs" >R$ 3.671,00</text><text x="1487.1" y="534.25" font-family="Liberation Sans" font-size="13.15" fill="#262626" textLength="77.4" lengthAdjust="spacingAndGlyphs" >R$ 12.840,00</text><rect x="133" y="548.4000000000001" width="191.6" height="33.3" fill="#D9D9D9" /><text x="144.2" y="570.1500000000001" font-family="Liberation Sans" font-size="13.15" fill="#111" font-weight="bold" textLength="121.1" lengthAdjust="spacingAndGlyphs" >Sub grupo receita 04</text><text x="338.5" y="570.1500000000001" font-family="Liberation Sans" font-size="13.15" fill="#262626" textLength="70" lengthAdjust="spacingAndGlyphs" >R$ 3.306,00</text><text x="441.7" y="570.1500000000001" font-family="Liberation Sans" font-size="13.15" fill="#262626" textLength="70" lengthAdjust="spacingAndGlyphs" >R$ 1.197,00</text><text x="1487.1" y="570.1500000000001" font-family="Liberation Sans" font-size="13.15" fill="#262626" textLength="69.4" lengthAdjust="spacingAndGlyphs" >R$ 4.503,00</text><rect x="133" y="584.3000000000001" width="191.6" height="33.3" fill="#D9D9D9" /><text x="144.2" y="606.0500000000001" font-family="Liberation Sans" font-size="13.15" fill="#111" font-weight="bold" textLength="121.1" lengthAdjust="spacingAndGlyphs" >Sub grupo receita 05</text><text x="338.5" y="606.0500000000001" font-family="Liberation Sans" font-size="13.15" fill="#262626" textLength="70" lengthAdjust="spacingAndGlyphs" >R$ 4.553,00</text><text x="441.7" y="606.0500000000001" font-family="Liberation Sans" font-size="13.15" fill="#262626" textLength="70" lengthAdjust="spacingAndGlyphs" >R$ 6.558,00</text><text x="1487.1" y="606.0500000000001" font-family="Liberation Sans" font-size="13.15" fill="#262626" textLength="77.4" lengthAdjust="spacingAndGlyphs" >R$ 11.111,00</text><rect x="133" y="620.2" width="191.6" height="33.3" fill="#D9D9D9" /><text x="144.2" y="641.95" font-family="Liberation Sans" font-size="13.15" fill="#111" font-weight="bold" textLength="121.1" lengthAdjust="spacingAndGlyphs" >Sub grupo receita 06</text><text x="338.5" y="641.95" font-family="Liberation Sans" font-size="13.15" fill="#262626" textLength="70" lengthAdjust="spacingAndGlyphs" >R$ 3.253,00</text><text x="441.7" y="641.95" font-family="Liberation Sans" font-size="13.15" fill="#262626" textLength="70" lengthAdjust="spacingAndGlyphs" >R$ 5.903,00</text><text x="1487.1" y="641.95" font-family="Liberation Sans" font-size="13.15" fill="#262626" textLength="69.4" lengthAdjust="spacingAndGlyphs" >R$ 9.156,00</text><rect x="133" y="656.1" width="191.6" height="33.3" fill="#D9D9D9" /><text x="144.2" y="677.85" font-family="Liberation Sans" font-size="13.15" fill="#111" font-weight="bold" textLength="121.1" lengthAdjust="spacingAndGlyphs" >Sub grupo receita 07</text><text x="338.5" y="677.85" font-family="Liberation Sans" font-size="13.15" fill="#262626" textLength="70" lengthAdjust="spacingAndGlyphs" >R$ 2.368,00</text><text x="441.7" y="677.85" font-family="Liberation Sans" font-size="13.15" fill="#262626" textLength="70" lengthAdjust="spacingAndGlyphs" >R$ 2.627,00</text><text x="1487.1" y="677.85" font-family="Liberation Sans" font-size="13.15" fill="#262626" textLength="69.4" lengthAdjust="spacingAndGlyphs" >R$ 4.995,00</text><rect x="1578" y="224" width="22" height="604" fill="#F5F5F5" /><path d="M1584.8,236.8 L1589.4,230.2 L1594,236.8 Z" stroke="none" fill="#6E6E6E" stroke-width="1" /><rect x="1585.3" y="242.7" width="8.7" height="93.4" fill="#6E6E6E" rx="4.35" /><path d="M1584.4,783.8 L1594.4,783.8 L1589.4,790.6 Z" stroke="none" fill="#6E6E6E" stroke-width="1" /><rect x="0" y="794" width="1578" height="34" fill="#EFEFEF" /><line x1="0" y1="794.5" x2="1578" y2="794.5" stroke="#D8D8D8" stroke-width="1" /><rect x="76" y="800.5" width="1502" height="18" fill="#F6F6F6" rx="9" /><rect x="0" y="827" width="1600" height="23" fill="#F3F3F3" /><line x1="0" y1="827.6" x2="1600" y2="827.6" stroke="#D4D4D4" stroke-width="1.2" /><text x="11.9" y="843.7" font-family="Liberation Sans" font-size="11.77" fill="#333" textLength="32.1" lengthAdjust="spacingAndGlyphs" >Pronto</text><path d="M32.8,805 L27,810 L32.8,814.8" stroke="#444" fill="none" stroke-width="1.2" /><circle cx="59.3" cy="806.5" r="1.1" fill="#444"/><circle cx="59.3" cy="810.8" r="1.1" fill="#444"/><circle cx="59.3" cy="815" r="1.1" fill="#444"/><path d="M87.7,806.7 L81.5,810.8 L87.7,814.8 Z" stroke="none" fill="#6E6E6E" stroke-width="1" /><rect x="93.3" y="805.6" width="825.5" height="9.4" fill="#6E6E6E" rx="4.7" /><path d="M1566,805.8 L1572.5,810.5 L1566,815.3 Z" stroke="none" fill="#6E6E6E" stroke-width="1" /><rect x="66.5" y="833" width="14" height="12" fill="none" stroke="#555" stroke-width="1.1" /><line x1="66.5" y1="836" x2="80.5" y2="836" stroke="#555" stroke-width="1" /><circle cx="76" cy="841" r="3.2" fill="#FFFFFF" stroke="#444" stroke-width="1.1"/><circle cx="76" cy="841" r="1.3" fill="#444"/><path d="M68.5,839 h4 M68.5,841.5 h3" stroke="#555" fill="none" stroke-width="0.9" /><circle cx="106.5" cy="833.8" r="1.9" fill="none" stroke="#333" stroke-width="1.1"/><path d="M100.5,836 c1.5,2 4,2.5 6,2.5 c2,0 4.5,-0.5 6,-2.5 M106.5,838.5 v3 c-1,2 -3,3.5 -4,5.5 M106.5,841.5 c0.5,1 1,1.5 1.5,2" stroke="#333" fill="none" stroke-width="1.1" /><path d="M108.7,842.2 L113.8,847.3 M113.8,842.2 L108.7,847.3" stroke="#333" fill="none" stroke-width="1.1" /><text x="117.5" y="844" font-family="Liberation Sans" font-size="13.37" fill="#222" font-weight="bold" textLength="131.5" lengthAdjust="spacingAndGlyphs" >Acessibilidade: investigar</text><rect x="1157" y="833" width="12" height="9" fill="none" stroke="#444" stroke-width="1.1" /><circle cx="1167.5" cy="843" r="3" fill="#FFFFFF" stroke="#444" stroke-width="1"/><text x="1174" y="844.6" font-family="Liberation Sans" font-size="14.68" fill="#333" textLength="99.6" lengthAdjust="spacingAndGlyphs" >Exibir Configurações</text><rect x="1295" y="827.8" width="41.3" height="22.2" fill="#DEDEDE" /><rect x="1309" y="832.8" width="12.8" height="12.2" fill="none" stroke="#444" stroke-width="1.1" /><path d="M1313.3,832.8 v12.2 M1317.5,832.8 v12.2 M1309,836.9 h12.8 M1309,841 h12.8" stroke="#444" fill="none" stroke-width="1" /><rect x="1350.5" y="832.8" width="14" height="12.2" fill="none" stroke="#555" stroke-width="1.1" /><rect x="1353.5" y="835.3" width="8" height="7.2" fill="none" stroke="#555" stroke-width="0.9" /><path d="M1355,837.5 h5 M1355,839.5 h5" stroke="#555" fill="none" stroke-width="0.8" /><rect x="1391.7" y="832.8" width="14.5" height="12.2" fill="none" stroke="#555" stroke-width="1.1" /><path d="M1396,832.8 v6.5 h6 v-6.5" stroke="#555" fill="none" stroke-width="1.1" /><line x1="1426" y1="839.3" x2="1433.7" y2="839.3" stroke="#555" stroke-width="1.1" /><line x1="1439" y1="839.3" x2="1542.3" y2="839.3" stroke="#8A8A8A" stroke-width="0.9" /><rect x="1483.4" y="833" width="5" height="11.6" fill="#666" /><line x1="1491" y1="836" x2="1491" y2="842.5" stroke="#777" stroke-width="0.9" /><path d="M1548,839.3 h8 M1552,835.3 v8" stroke="#555" fill="none" stroke-width="1.1" /><text x="1569.6" y="844.6" font-family="Liberation Sans" font-size="14.53" fill="#333" textLength="20.1" lengthAdjust="spacingAndGlyphs" >90%</text></svg></body></html>
